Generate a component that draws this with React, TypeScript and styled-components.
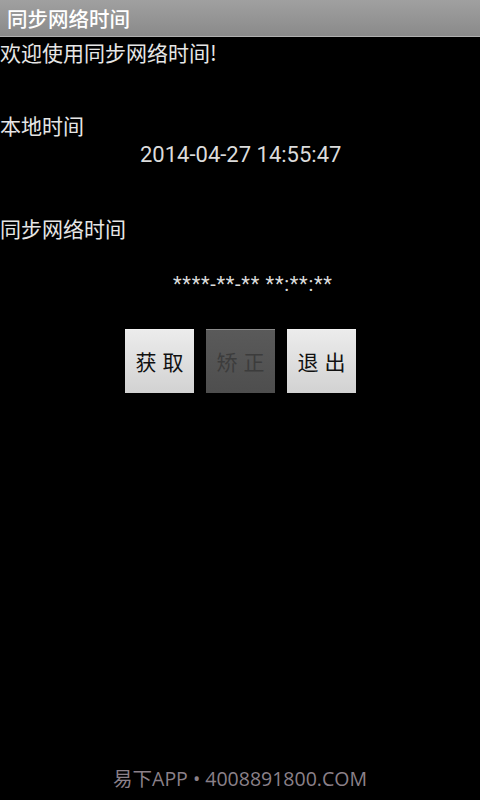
import React from "react";
import styled, { createGlobalStyle } from "styled-components";

const Global = createGlobalStyle`
  html, body { margin: 0; padding: 0; background: #000; }
  body { font-family: "Noto Sans CJK SC", Roboto, sans-serif; }
`;

const Screen = styled.div`
  width: 480px;
  height: 800px;
  background: #000;
  display: flex;
  flex-direction: column;
  overflow: hidden;
`;

const TitleBar = styled.div`
  height: 37px;
  flex: none;
  box-sizing: border-box;
  background: linear-gradient(#a0a0a0, #8a8a8a);
  border-bottom: 1px solid #b0b0b0;
  display: flex;
  align-items: center;
  padding-left: 7px;
  color: #fff;
  font-size: 20.5px;
  font-weight: 500;
  font-family: "Noto Sans CJK SC", sans-serif;
`;

const Body = styled.div`
  flex: 1;
  display: flex;
  flex-direction: column;
`;

const Label = styled.div<{ $mt: number }>`
  margin-top: ${(p) => p.$mt}px;
  height: 30px;
  line-height: 30px;
  color: #e6e6e6;
  font-size: 21px;
  font-family: "Noto Sans CJK SC", sans-serif;
`;

const Value = styled.div<{ $mt: number; $pl: number; $size: number; $spacing?: number }>`
  margin-top: ${(p) => p.$mt}px;
  padding-left: ${(p) => p.$pl}px;
  height: 28px;
  line-height: 28px;
  color: #dcdcdc;
  font-size: ${(p) => p.$size}px;
  font-family: Roboto, sans-serif;
  letter-spacing: ${(p) => p.$spacing ?? 0}px;
`;

const Buttons = styled.div`
  margin-top: 31px;
  display: flex;
  justify-content: center;
  gap: 12px;
  padding-left: 1px;
`;

const Btn = styled.div<{ $disabled?: boolean }>`
  width: 69px;
  height: 64px;
  display: flex;
  align-items: center;
  justify-content: center;
  font-size: 21px;
  font-family: "Noto Sans CJK SC", sans-serif;
  letter-spacing: 6px;
  text-indent: 6px;
  color: ${(p) => (p.$disabled ? "#3c3c3c" : "#111")};
  background: ${(p) =>
    p.$disabled
      ? "linear-gradient(#5a5a5a, #4e4e4e)"
      : "linear-gradient(#ececec, #d2d2d2)"};
  box-shadow: inset 0 1px 0 rgba(255, 255, 255, 0.3);
`;

const Footer = styled.div`
  height: 40px;
  flex: none;
  margin-bottom: 3px;
  display: flex;
  align-items: center;
  justify-content: center;
  color: #8b8089;
  font-size: 19.5px;
  font-family: "Open Sans", "Noto Sans CJK SC", sans-serif;
`;

export default function App() {
  return (
    <Screen>
      <Global />
      <TitleBar>同步网络时间</TitleBar>
      <Body>
        <Label $mt={0}>欢迎使用同步网络时间!</Label>
        <Label $mt={43}>本地时间</Label>
        <Value $mt={1} $pl={140} $size={22}>2014-04-27 14:55:47</Value>
        <Label $mt={44}>同步网络时间</Label>
        <Value $mt={27} $pl={173} $size={20} $spacing={0.7}>****-**-** **:**:**</Value>
        <Buttons>
          <Btn>获取</Btn>
          <Btn $disabled>矫正</Btn>
          <Btn>退出</Btn>
        </Buttons>
      </Body>
      <Footer>易下APP • 4008891800.COM</Footer>
    </Screen>
  );
}
